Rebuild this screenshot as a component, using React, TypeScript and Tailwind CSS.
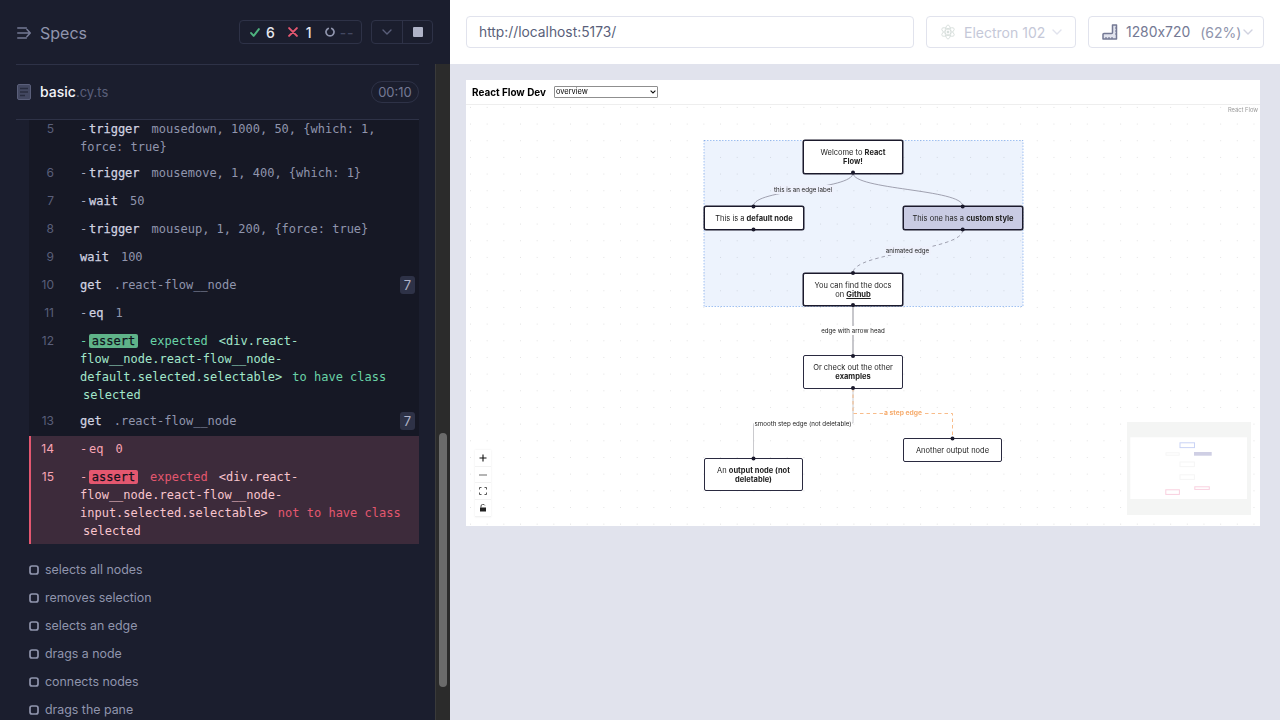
import React from "react";

const mono = "font-['DejaVu_Sans_Mono','Liberation_Mono',monospace]";
const heavy = "[-webkit-text-stroke:0.25px_currentColor]";

function Row({ n, children, right, failed, first, multi, className }: { n: number; children: React.ReactNode; right?: string; failed?: boolean; first?: boolean; multi?: boolean; className?: string }) {
  const pad = className ?? `${first ? "pt-0" : "pt-[5px]"} ${multi ? "pb-[3px]" : "pb-[5px]"}`;
  return (
    <div className={`flex ${pad} ${failed ? "bg-[#3d2b3b] border-l-2 border-[#e45770]" : "border-l-2 border-transparent"}`}>
      <div className={`w-[23px] shrink-0 text-right ${failed ? "text-[#f8a5b4]" : "text-[#5a5f7a]"} text-[12px] leading-[18px] font-['Inter',sans-serif]`}>{n}</div>
      <div className={`ml-[26px] flex-1 min-w-0 text-[12px] leading-[18px] whitespace-pre ${mono}`}>{children}</div>
      {right && <div className="mr-[4px] w-[15px] h-[18px] rounded-[3px] bg-[#2e3247] text-[#b0b3c8] text-[13px] leading-[18px] text-center font-['Inter',sans-serif]">{right}</div>}
    </div>
  );
}

const Cmd = ({ dash, name, args }: { dash?: boolean; name: string; args?: string }) => (
  <div className="flex">
    {dash && <span className="w-[9px] text-[#a6a9bd]">-</span>}
    <span className={`text-[#d0d2e0] ${heavy}`}>{name}</span>
    {args && <span className="ml-[12px] text-[#9095ad]">{args}</span>}
  </div>
);

function Test({ label }: { label: string }) {
  return (
    <div className="flex items-center h-[28px] ml-[13px] shrink-0">
      <svg width="10" height="10" viewBox="0 0 10 10">
        <rect x="1" y="1" width="8" height="8" rx="2" fill="#1b1e2e" stroke="#9095ad" strokeWidth="1.7" />
      </svg>
      <span className="ml-[6px] text-[12.4px] text-[#9095ad] font-['Inter',sans-serif]">{label}</span>
    </div>
  );
}

const Chevron = ({ c, w = 10 }: { c: string; w?: number }) => (
  <svg width={w} height="6" viewBox="0 0 10 6" fill="none">
    <path d="M1 1l4 4 4-4" stroke={c} strokeWidth="1.4" strokeLinecap="round" strokeLinejoin="round" />
  </svg>
);

function Sidebar() {
  return (
    <aside className="w-[450px] h-[720px] flex flex-col bg-[#1b1e2e] font-['Inter',sans-serif] shrink-0">
      <header className="h-[64px] shrink-0 flex items-center pl-[17px] pr-[17px]">
        <svg width="14" height="12" viewBox="0 0 14 12" fill="none" stroke="#747994" strokeWidth="1.6" strokeLinecap="round" strokeLinejoin="round" className="mt-[2px]">
          <path d="M0.8 1h8.5M0.8 6h12M0.8 11h8.5M10 2.5L13.2 6 10 9.5" />
        </svg>
        <span className="ml-[9px] mt-[1px] text-[16px] text-[#9095ad]">Specs</span>
        <div className="ml-auto flex items-center gap-[9px]">
          <div className="w-[123px] h-[24px] flex items-center border border-[#2e3247] rounded-[4px] pl-[10px] text-[14px] font-medium">
            <svg width="10" height="9" viewBox="0 0 9 8" fill="none"><path d="M1 4.5L3.3 7 8 1" stroke="#4eb37f" strokeWidth="1.8" strokeLinecap="round" strokeLinejoin="round" /></svg>
            <span className="ml-[6px] text-[#e8e9f0]">6</span>
            <svg width="10" height="10" viewBox="0 0 9 9" fill="none" className="ml-[13px]"><path d="M1 1l7 7M8 1L1 8" stroke="#e45770" strokeWidth="1.8" strokeLinecap="round" /></svg>
            <span className="ml-[8px] text-[#e8e9f0]">1</span>
            <svg width="10" height="10" viewBox="0 0 10 10" fill="none" className="ml-[13px]"><path d="M3.2 1.4a4 4 0 1 0 3.6 0" stroke="#9095ad" strokeWidth="1.7" strokeLinecap="round" /></svg>
            <span className="ml-[5px] text-[#434861] tracking-[1px]">--</span>
          </div>
          <div className="w-[62px] h-[24px] flex border border-[#2e3247] rounded-[4px]">
            <div className="w-[31px] flex items-center justify-center border-r border-[#2e3247]"><Chevron c="#5a5f7a" /></div>
            <div className="flex-1 flex items-center justify-center"><div className="w-[10px] h-[10px] rounded-[1px] bg-[#afb3c7]" /></div>
          </div>
        </div>
      </header>
      <div className="flex flex-1 min-h-0">
        <main className="w-[435px] px-[16px] flex flex-col overflow-hidden">
          <div className="h-[56px] shrink-0 border-y border-[#2e3247] flex items-center">
            <svg width="14" height="16" viewBox="0 0 14 16" className="ml-[1px]">
              <rect x="0.5" y="0.5" width="13" height="15" rx="1.5" fill="#434861" stroke="#5a5f7a" />
              <path d="M3 4.5h8M3 8h8M3 11.5h5" stroke="#1b1e2e" strokeWidth="1.3" opacity="0.65" />
            </svg>
            <div className="ml-[9px] flex items-baseline">
              <span className="text-[14px] font-medium text-[#f3f4fa]">basic</span>
              <span className="text-[13px] text-[#5a5f7a]">.cy.ts</span>
            </div>
            <div className="ml-auto w-[48px] h-[22px] mt-[-1px] rounded-full border border-[#2e3247] text-[13px] leading-[20px] text-center text-[#747994]">00:10</div>
          </div>
          <div className="ml-[13px] bg-[#161825] shrink-0">
            <Row n={5} first multi>
              <Cmd dash name="trigger" args="mousedown, 1000, 50, {which: 1," />
              <div className="text-[#9095ad]">force: true{"}"}</div>
            </Row>
            <Row n={6}><Cmd dash name="trigger" args="mousemove, 1, 400, {which: 1}" /></Row>
            <Row n={7}><Cmd dash name="wait" args="50" /></Row>
            <Row n={8}><Cmd dash name="trigger" args="mouseup, 1, 200, {force: true}" /></Row>
            <Row n={9}><Cmd name="wait" args="100" /></Row>
            <Row n={10} right="7"><Cmd name="get" args=".react-flow__node" /></Row>
            <Row n={11}><Cmd dash name="eq" args="1" /></Row>
            <Row n={12} multi>
              <div className="flex">
                <span className="w-[9px] text-[#69d3a7]">-</span>
                <span className={`w-[49px] h-[14px] mt-[2px] rounded-[2px] bg-[#5fb389] text-[#10121c] leading-[14px] text-center ${heavy}`}>assert</span>
                <span className="ml-[12px] text-[#69d3a7]">expected</span>
                <span className="ml-[11px] text-[#a3e7cb]">{"<div.react-"}</span>
              </div>
              <div className="text-[#a3e7cb]">flow__node.react-flow__node-</div>
              <div className="flex"><span className="text-[#a3e7cb]">{"default.selected.selectable>"}</span><span className="ml-[10px] text-[#69d3a7]">to have class</span></div>
              <div className="ml-[3px] text-[#a3e7cb]">selected</div>
            </Row>
            <Row n={13} right="7" className="pt-[5px] pb-[6px]"><Cmd name="get" args=".react-flow__node" /></Row>
            <Row n={14} failed className="pt-[4px] pb-[5px]">
              <div className="flex"><span className="w-[9px] text-[#f8a5b4]">-</span><span className="text-[#f8a5b4]">eq</span><span className="ml-[12px] text-[#f8a5b4]">0</span></div>
            </Row>
            <Row n={15} failed className="pt-[5px] pb-[4px]">
              <div className="flex">
                <span className="w-[9px] text-[#f8a5b4]">-</span>
                <span className={`w-[49px] h-[14px] mt-[2px] rounded-[2px] bg-[#e4576f] text-[#10121c] leading-[14px] text-center ${heavy}`}>assert</span>
                <span className="ml-[12px] text-[#e4576f]">expected</span>
                <span className="ml-[11px] text-[#f8c4cd]">{"<div.react-"}</span>
              </div>
              <div className="text-[#f8c4cd]">flow__node.react-flow__node-</div>
              <div className="flex"><span className="text-[#f8c4cd]">{"input.selected.selectable>"}</span><span className="ml-[10px] text-[#e4576f]">not to have class</span></div>
              <div className="ml-[3px] text-[#f8c4cd]">selected</div>
            </Row>
          </div>
          <div className="mt-[12px] flex flex-col">
            {["selects all nodes", "removes selection", "selects an edge", "drags a node", "connects nodes", "drags the pane"].map((t) => <Test key={t} label={t} />)}
          </div>
        </main>
        <div className="w-[15px] bg-[#2b2b2b] border-l border-[#3a3a3a] shrink-0">
          <div className="ml-[3px] mt-[369px] w-[8px] h-[254px] rounded-full bg-[#6b6b6b]" />
        </div>
      </div>
    </aside>
  );
}

function Node({ x, y, w, h, custom, selected, children }: { x: number; y: number; w: number; h: number; custom?: boolean; selected?: boolean; children: React.ReactNode }) {
  return (
    <div
      className={`absolute flex items-center justify-center text-center border rounded-[2px] text-[7.5px] leading-[9px] text-[#222] whitespace-nowrap ${selected ? "border-[#1a192b] shadow-[0_0_0_0.5px_#1a192b]" : "border-[#2a2a40]"} ${custom ? "bg-[#c9cbe3]" : "bg-white"}`}
      style={{ left: x, top: y, width: w, height: h }}
    >
      <div>{children}</div>
    </div>
  );
}

function Label({ cx, cy, w, bold, tint, children }: { cx: number; cy: number; w: number; bold?: boolean; tint?: boolean; children: React.ReactNode }) {
  return (
    <div
      className={`absolute h-[9px] text-center leading-[9px] whitespace-nowrap ${tint ? "bg-[#eef1fc]" : "bg-white"} ${bold ? "text-[6.7px] font-bold text-[#f6ab6c]" : "text-[6.2px] text-[#222]"}`}
      style={{ left: cx - w / 2, top: cy - 4.5, width: w }}
    >
      {children}
    </div>
  );
}

const ox = 466;
const oy = 105;

function Flow() {
  const handles = [[853, 172.5], [753.5, 206.5], [962.7, 206.5], [753.5, 229.5], [962.7, 229.5], [853, 273], [853, 305], [853, 356], [853, 388], [952.5, 438.5], [753.5, 458.5]];
  return (
    <div className="relative flex-1 overflow-hidden">
      <svg width="794" height="421" viewBox={`${ox} ${oy} 794 421`} className="absolute left-0 top-0">
        <defs>
          <pattern id="dots" x={ox + 4} y={oy + 1.9} width="16.67" height="16.67" patternUnits="userSpaceOnUse">
            <circle cx="0.5" cy="0.5" r="0.45" fill="#c8c8c8" />
          </pattern>
        </defs>
        <rect x={ox} y={oy} width="794" height="421" fill="url(#dots)" />
        <rect x="704" y="140.5" width="319" height="166" fill="#0059dc" fillOpacity="0.07" stroke="#0059dc" strokeOpacity="0.5" strokeWidth="0.7" strokeDasharray="1.5 1.5" />
        <g fill="none" stroke="#8b8c9c" strokeWidth="0.8">
          <path d="M853 173C853 190 753.5 189 753.5 206" />
          <path d="M853 173C853 190 962.7 189 962.7 206" />
          <path d="M962.7 230C962.7 251 853 252 853 273" strokeDasharray="3.5 3" />
          <path d="M853 305V356" stroke="#a9a9b0" strokeWidth="1.3" />
          <path d="M853 388V423H755a1.5 1.5 0 0 0-1.5 1.5V458" stroke="#bdbdc2" />
          <path d="M853 388V413.5H952.5V438" stroke="#f6ab6c" strokeDasharray="3.5 3" />
        </g>
      </svg>
      <div className="absolute inset-0" style={{ left: -ox, top: -oy, width: 1280, height: 720 }}>
        <Node x={803} y={140} w={100} h={34} selected>Welcome to <strong>React</strong><br /><strong>Flow!</strong></Node>
        <Node x={704} y={206} w={100} h={24} selected>This is a <strong>default node</strong></Node>
        <Node x={903} y={206} w={120} h={24} custom selected>This one has a <strong>custom style</strong></Node>
        <Node x={803} y={273} w={100} h={33} selected>You can find the docs<br />on <strong className="underline">Github</strong></Node>
        <Node x={803} y={355} w={100} h={34}>Or check out the other<br /><strong>examples</strong></Node>
        <Node x={903} y={438} w={99} h={24}>Another output node</Node>
        <Node x={704} y={458} w={99} h={33}>An <strong>output node (not</strong><br /><strong>deletable)</strong></Node>
        <Label cx={803} cy={189.5} w={62} tint>this is an edge label</Label>
        <Label cx={907.5} cy={250.5} w={46} tint>animated edge</Label>
        <Label cx={853} cy={330.5} w={64}>edge with arrow head</Label>
        <Label cx={803} cy={423} w={98}>smooth step edge (not deletable)</Label>
        <Label cx={903} cy={413.5} w={40} bold>a step edge</Label>
      </div>
      <svg width="794" height="421" viewBox={`${ox} ${oy} 794 421`} className="absolute left-0 top-0 pointer-events-none">
        {handles.map(([x, y]) => <circle key={`${x}-${y}`} cx={x} cy={y} r="2" fill="#1a192b" />)}
      </svg>
      <div className="absolute top-[1px] right-[2px] text-[5.8px] leading-[8px] text-[#999]">React Flow</div>
      <div className="absolute left-[9px] bottom-[9px] w-[16px] flex flex-col bg-white shadow-[0_0_2px_rgba(0,0,0,0.08)]">
        {[
          <path d="M4 0.5v7M0.5 4h7" stroke="#111" strokeWidth="1.1" fill="none" />,
          <path d="M0 4h8" stroke="#777" strokeWidth="1.1" fill="none" />,
          <path d="M0.5 2.5v-2h2M5.5 0.5h2v2M7.5 5.5v2h-2M2.5 7.5h-2v-2" stroke="#444" strokeWidth="0.9" fill="none" />,
          <g><path d="M2 3.5v-1.5a2 2 0 0 1 3.8-.6" stroke="#222" strokeWidth="0.8" fill="none" /><rect x="1" y="3.5" width="6" height="4" fill="#222" /></g>,
        ].map((icon, i) => (
          <div key={i} className="h-[16.8px] flex items-center justify-center border-b border-[#f2f2f2]">
            <svg width="8" height="8" viewBox="0 0 8 8">{icon}</svg>
          </div>
        ))}
      </div>
      <svg width="124" height="93" viewBox="1127 422 124 93" className="absolute right-[9px] bottom-[11px]">
        <rect x="1127" y="422" width="124" height="93" fill="#f4f5f4" />
        <rect x="1130.3" y="437.3" width="116.7" height="61.7" fill="#fff" />
        <rect x="1180" y="442.8" width="14.5" height="4.8" fill="#fff" stroke="#c9d3f5" />
        <rect x="1166" y="452.8" width="13.2" height="2.4" fill="#fff" stroke="#f6f6f6" />
        <rect x="1194" y="452" width="17.7" height="3.7" fill="#cfcfe4" />
        <rect x="1180" y="462" width="14.4" height="4.6" fill="#fff" stroke="#f6f6f6" />
        <rect x="1180" y="474.8" width="14.4" height="4.6" fill="#fff" stroke="#f6f6f6" />
        <rect x="1194.8" y="486.8" width="14.5" height="2.6" fill="#fff" stroke="#f9d0df" />
        <rect x="1165.8" y="489.8" width="13.6" height="4.6" fill="#fff" stroke="#f9d0df" />
      </svg>
    </div>
  );
}

function Right() {
  return (
    <section className="flex-1 flex flex-col bg-[#e1e3ed] font-['Inter',sans-serif] [font-feature-settings:'calt'_0]">
      <div className="h-[64px] shrink-0 bg-white flex items-center pl-[16px] pr-[16px] gap-[12px]">
        <div className="w-[448px] h-[32px] rounded-[4px] border border-[#e1e3ed] flex items-center pl-[12px] text-[13.8px] text-[#5a5f7a]">http://localhost:5173/</div>
        <div className="w-[150px] h-[32px] rounded-[4px] border border-[#e1e3ed] flex items-center pl-[13px] text-[14px] text-[#c5c8d8]">
          <svg width="16" height="16" viewBox="0 0 16 16" fill="none" stroke="#d3dbd8" strokeWidth="0.8">
            <ellipse cx="8" cy="8" rx="7" ry="2.8" transform="rotate(30 8 8)" />
            <ellipse cx="8" cy="8" rx="7" ry="2.8" transform="rotate(90 8 8)" />
            <ellipse cx="8" cy="8" rx="7" ry="2.8" transform="rotate(150 8 8)" />
            <circle cx="8" cy="8" r="1" fill="#d3dbd8" />
          </svg>
          <span className="ml-[8px]">Electron 102</span>
          <span className="ml-[7px]"><Chevron c="#e1e3ed" /></span>
        </div>
        <div className="w-[176px] h-[32px] rounded-[4px] border border-[#e1e3ed] flex items-center pl-[13px] text-[14px]">
          <svg width="16" height="16" viewBox="0 0 16 16" fill="none">
            <path d="M10.5 1h4v14H1v-4.5a1 1 0 0 1 1-1h7.5a1 1 0 0 0 1-1z" fill="#e1e3ed" stroke="#747994" strokeWidth="1.5" strokeLinejoin="round" />
            <path d="M4 15v-2M7 15v-2M10 15v-2M15 4h-2M15 7h-2M15 10h-2" stroke="#747994" strokeWidth="1.2" />
          </svg>
          <span className="ml-[8px] text-[13.9px] text-[#747994]">1280x720</span>
          <span className="ml-[10px] text-[#9095ad]">(62%)</span>
          <span className="ml-[2px]"><Chevron c="#d0d2e0" /></span>
        </div>
      </div>
      <div className="pt-[16px] pl-[16px] pr-[20px]">
        <div className="w-[794px] h-[446px] bg-white flex flex-col blur-[0.3px]">
          <div className="h-[25px] shrink-0 border-b border-[#eeeeee] flex items-center pl-[6px]">
            <span className="w-[82px] text-[9.92px] font-bold text-black whitespace-nowrap">React Flow Dev</span>
            <div className="relative w-[104px] h-[12px]">
              <select className="appearance-none block w-full h-full border border-[#8f8f8f] rounded-[1px] bg-white text-[7.44px] leading-[10px] py-0 pl-[1px] pr-[8px] text-black outline-none" defaultValue="overview">
                <option value="overview">overview</option>
              </select>
              <svg width="6" height="4" viewBox="0 0 6 4" className="absolute right-[2px] top-[4px] pointer-events-none" fill="none">
                <path d="M0.6 0.6L3 3l2.4-2.4" stroke="#111" strokeWidth="1.1" />
              </svg>
            </div>
          </div>
          <Flow />
        </div>
      </div>
    </section>
  );
}

export default function App() {
  return (
    <div className="flex w-[1280px] h-[720px] overflow-hidden">
      <Sidebar />
      <Right />
    </div>
  );
}
